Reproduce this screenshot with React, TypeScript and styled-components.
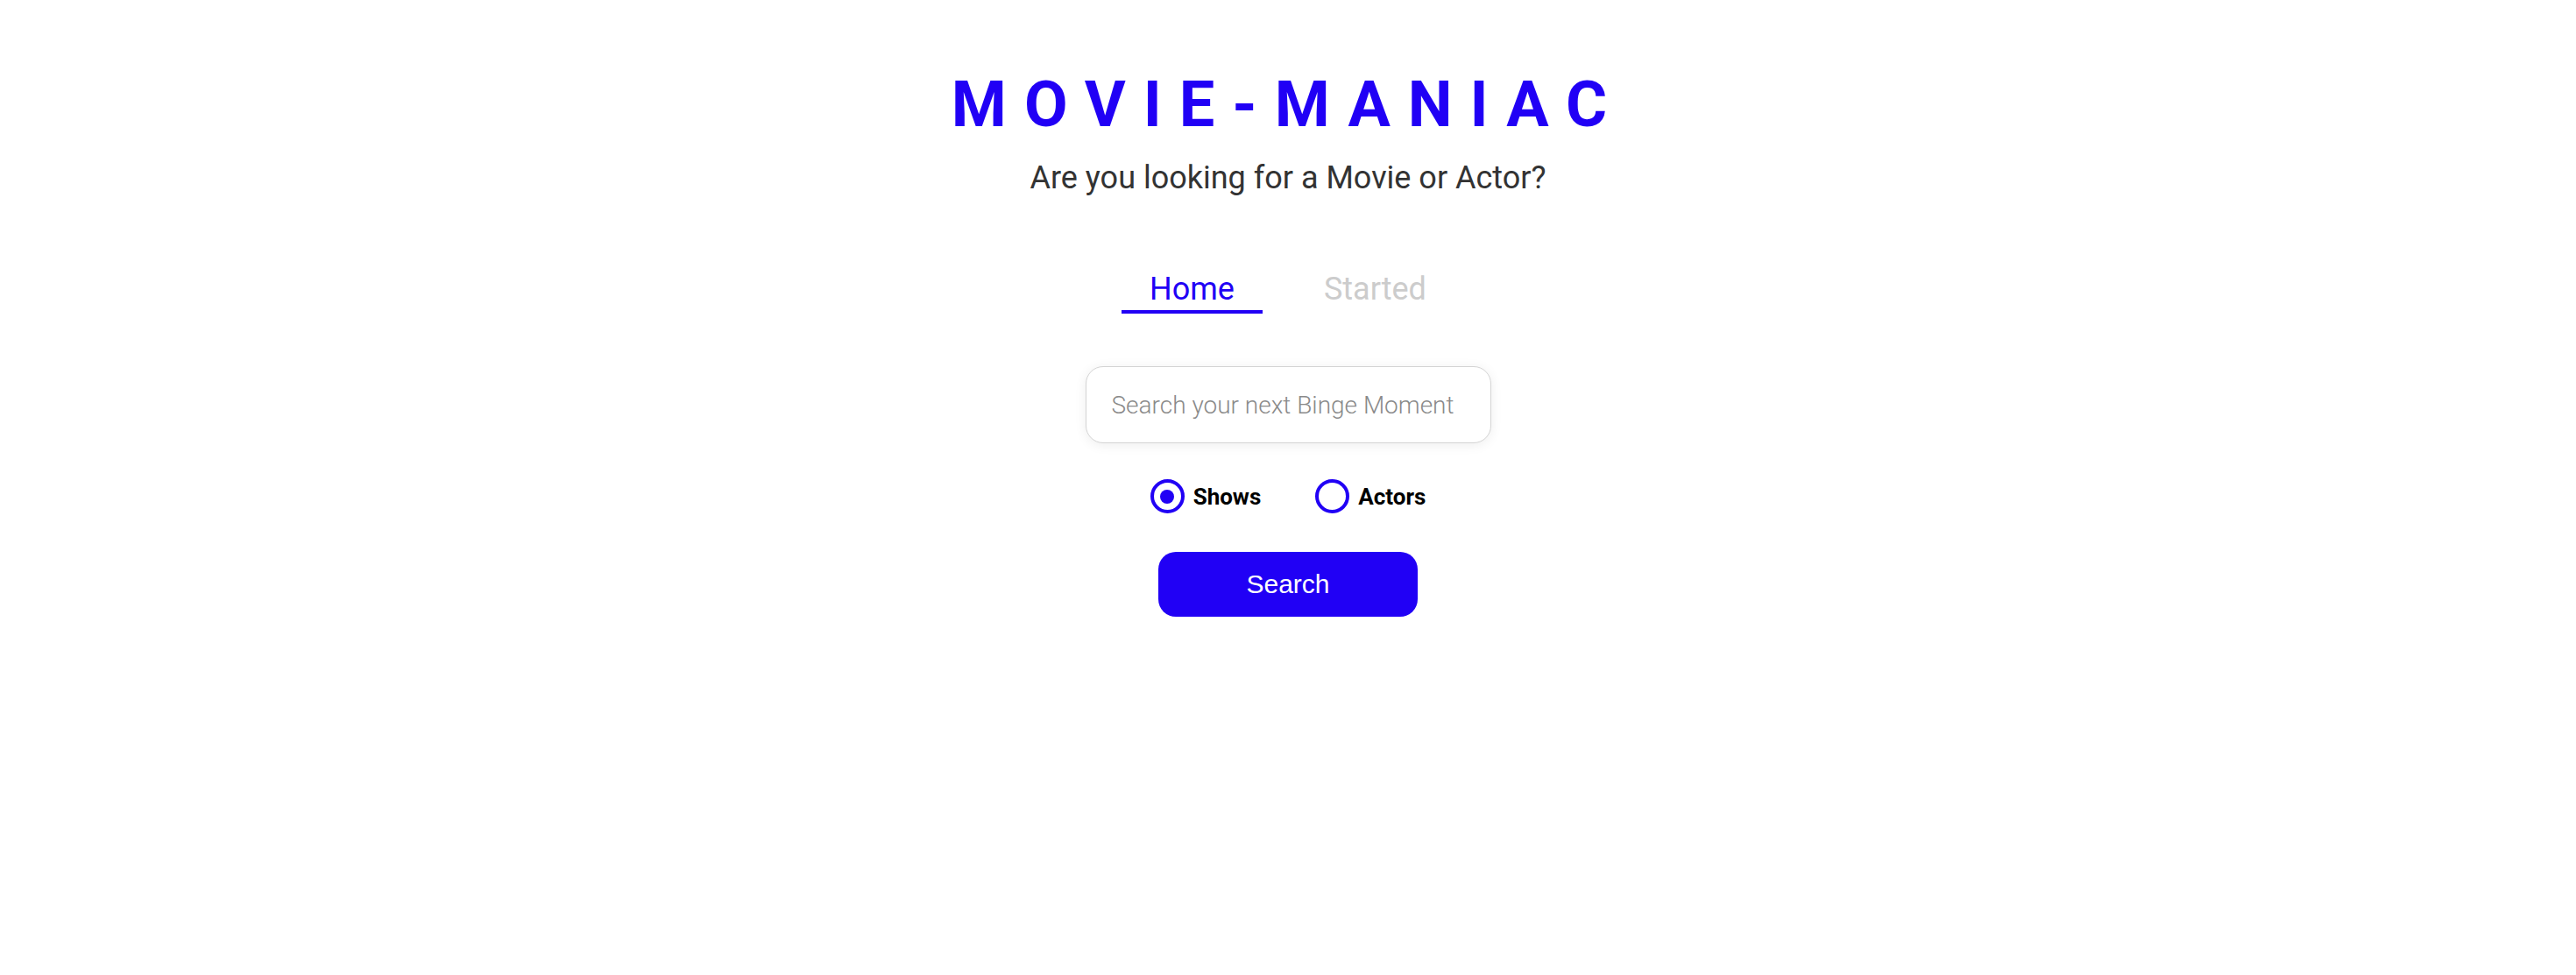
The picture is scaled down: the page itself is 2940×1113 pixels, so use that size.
import React, { useState } from "react";
import styled, { createGlobalStyle } from "styled-components";

const BLUE = "#2100f5";

const GlobalStyle = createGlobalStyle`
  html, body {
    margin: 0;
    padding: 0;
    background: #ffffff;
    font-family: Roboto, "Liberation Sans", Arial, sans-serif;
  }
`;

const Page = styled.main`
  display: flex;
  flex-direction: column;
  align-items: center;
  padding-top: 77px;
`;

const Title = styled.h1`
  margin: 0;
  font-family: Roboto, "Liberation Sans", sans-serif;
  font-weight: 700;
  font-size: 72px;
  line-height: normal;
  letter-spacing: 20px;
  color: ${BLUE};
`;

const Subtitle = styled.p`
  margin: 20px 0 0;
  font-family: Roboto, sans-serif;
  font-weight: 400;
  font-size: 36px;
  line-height: normal;
  color: #333333;
`;

const Tabs = styled.nav`
  display: flex;
  gap: 38px;
  margin-top: 85px;
`;

const Tab = styled.a<{ $active?: boolean }>`
  font-family: Roboto, sans-serif;
  font-size: 36px;
  line-height: normal;
  padding: 0 32px 3px;
  color: ${(p) => (p.$active ? BLUE : "#cccccc")};
  border-bottom: 4px solid ${(p) => (p.$active ? BLUE : "transparent")};
  text-decoration: none;
  cursor: pointer;
`;

const SearchInput = styled.input`
  box-sizing: border-box;
  margin-top: 60px;
  width: 463px;
  height: 88px;
  padding: 0 29px;
  border: 1.5px solid #d4d4d4;
  border-radius: 20px;
  box-shadow: 0 2px 14px rgba(0, 0, 0, 0.07);
  font-family: Roboto, sans-serif;
  font-weight: 300;
  font-size: 28px;
  color: #333;
  outline: none;
  &::placeholder {
    color: #8a8a8a;
  }
`;

const RadioRow = styled.div`
  display: flex;
  gap: 62px;
  margin-top: 41px;
`;

const RadioLabel = styled.label`
  display: flex;
  align-items: center;
  gap: 10px;
  font-family: Roboto, sans-serif;
  font-weight: 700;
  font-size: 26px;
  color: #000;
  cursor: pointer;
`;

const RadioInput = styled.input`
  appearance: none;
  box-sizing: border-box;
  margin: 0;
  width: 39px;
  height: 39px;
  border: 4px solid ${BLUE};
  border-radius: 50%;
  display: grid;
  place-items: center;
  cursor: pointer;
  &::before {
    content: "";
    width: 16px;
    height: 16px;
    border-radius: 50%;
    background: ${BLUE};
    transform: scale(0);
  }
  &:checked::before {
    transform: scale(1);
  }
`;

const SearchButton = styled.button`
  margin-top: 44px;
  width: 296px;
  height: 74px;
  border: none;
  border-radius: 20px;
  background: ${BLUE};
  color: #ffffff;
  font-family: "Liberation Sans", Arial, sans-serif;
  font-size: 30px;
  cursor: pointer;
`;

export default function App() {
  const [kind, setKind] = useState<"shows" | "actors">("shows");
  return (
    <>
      <GlobalStyle />
      <Page>
        <Title>MOVIE-MANIAC</Title>
        <Subtitle>Are you looking for a Movie or Actor?</Subtitle>
        <Tabs>
          <Tab $active>Home</Tab>
          <Tab>Started</Tab>
        </Tabs>
        <SearchInput placeholder="Search your next Binge Moment" />
        <RadioRow>
          <RadioLabel>
            <RadioInput
              type="radio"
              name="kind"
              checked={kind === "shows"}
              onChange={() => setKind("shows")}
            />
            Shows
          </RadioLabel>
          <RadioLabel>
            <RadioInput
              type="radio"
              name="kind"
              checked={kind === "actors"}
              onChange={() => setKind("actors")}
            />
            Actors
          </RadioLabel>
        </RadioRow>
        <SearchButton>Search</SearchButton>
      </Page>
    </>
  );
}
